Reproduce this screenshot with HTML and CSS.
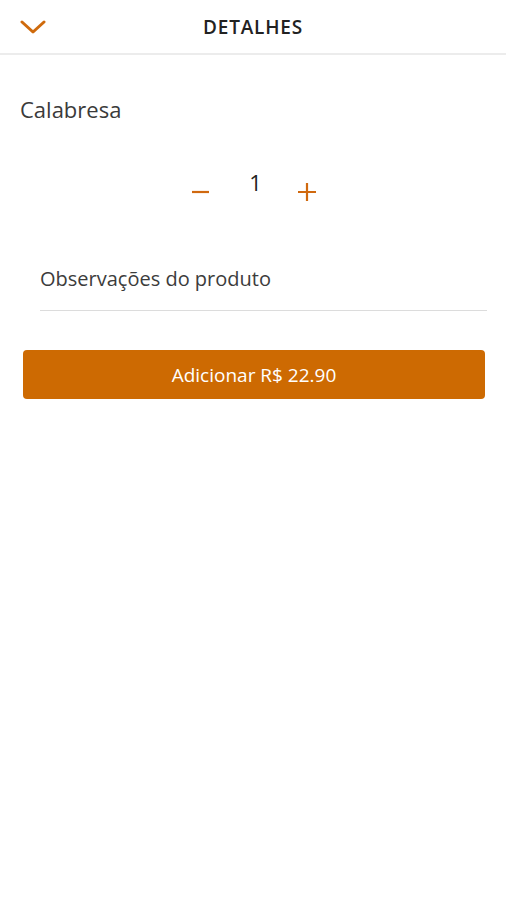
FILE: index.html
```html
<!DOCTYPE html>
<html lang="pt-BR">
<head>
  <meta charset="UTF-8" />
  <meta name="viewport" content="width=device-width, initial-scale=1" />
  <title>Detalhes</title>
  <link rel="stylesheet" href="styles.css">
</head>
<body>
  <!-- Top bar -->
  <div class="topbar">
    <button class="back" aria-label="Fechar">
      <svg width="26" height="14" viewBox="0 0 26 14">
        <path d="M2 2 L13 12 L24 2" fill="none" stroke="#cf6a0c" stroke-width="3" stroke-linecap="round" stroke-linejoin="round"/>
      </svg>
    </button>
    <div class="title">DETALHES</div>
  </div>

  <div class="content">
    <div class="product-name">Calabresa</div>

    <!-- Quantity -->
    <div class="qty">
      <button class="qty-btn minus" aria-label="Diminuir">
        <svg width="17" height="18" viewBox="0 0 17 18">
          <path d="M0 9 H17" stroke="#d0690f" stroke-width="2.2"/>
        </svg>
      </button>
      <span class="qty-value">1</span>
      <button class="qty-btn" aria-label="Aumentar">
        <svg width="18" height="18" viewBox="0 0 18 18">
          <path d="M0 9 H18 M9 0 V18" stroke="#d0690f" stroke-width="2.2"/>
        </svg>
      </button>
    </div>

    <!-- Notes -->
    <div class="notes">
      <input type="text" placeholder="Observações do produto" />
    </div>

    <button class="add">Adicionar R$ 22.90</button>
  </div>
</body>
</html>
```

FILE: styles.css
```css
/* Basic resets */
html, body {
  margin: 0;
  padding: 0;
  background: #fff;
  font-family: "Open Sans", sans-serif;
  color: #333;
}

/* Top bar */
.topbar {
  position: relative;
  height: 53px;
  display: flex;
  align-items: center;
  justify-content: center;
  border-bottom: 2px solid #ececec;
}
.back {
  position: absolute;
  left: 20px;
  top: 20px;
  padding: 0;
  border: none;
  background: none;
  line-height: 0;
}
.title {
  font-size: 19px;
  font-weight: 600;
  color: #222;
  letter-spacing: 0.8px;
  margin-top: 1px;
}

.content {
  padding: 0 22px;
}

.product-name {
  margin-top: 39px;
  margin-left: -2px;
  font-size: 22px;
  line-height: 30px;
  color: #3a3a3a;
}

/* Quantity selector */
.qty {
  display: flex;
  justify-content: center;
  align-items: flex-start;
  gap: 36px;
  margin-top: 46px;
  margin-left: 2px;
  height: 40px;
}
.qty-btn {
  border: none;
  background: none;
  padding: 0;
  line-height: 0;
  margin-top: 13px;
}
.qty-btn.minus {
  margin-right: 4px;
}
.qty-value {
  font-size: 22px;
  line-height: 24px;
  color: #222;
}

/* Notes field */
.notes {
  margin: 55px -3px 0 18px;
  border-bottom: 1px solid #dcdcdc;
}
.notes input {
  width: 100%;
  border: none;
  outline: none;
  padding: 0 0 18px;
  font-family: inherit;
  font-size: 20px;
  color: #333;
}
.notes input::placeholder {
  color: #3c3c3c;
}

/* Add button */
.add {
  display: block;
  width: 462px;
  height: 49px;
  margin: 39px 0 0 1px;
  border: none;
  border-radius: 4px;
  background: #cd6a02;
  color: #fff;
  font-family: inherit;
  font-size: 19px;
}
```
